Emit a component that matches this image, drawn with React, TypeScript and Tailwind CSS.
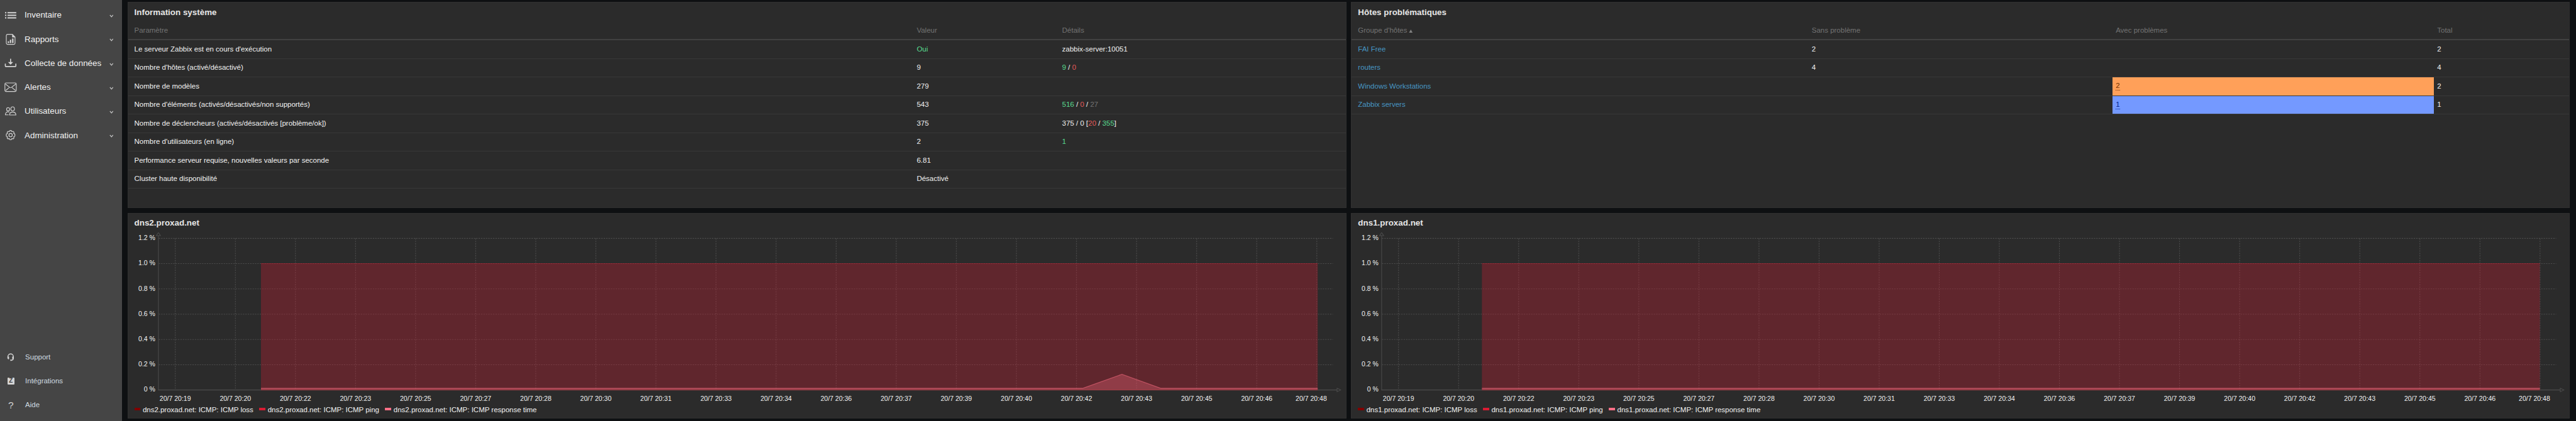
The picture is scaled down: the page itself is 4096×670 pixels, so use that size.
import type { ReactNode } from "react";

const stroke = { fill: "none", stroke: "#d4d4d4", strokeWidth: 1.4 } as const;

const icons: Record<string, ReactNode> = {
  list: (
    <g fill="#d4d4d4">
      {[5.2, 10.2, 15.2].map((y) => (
        <g key={y}>
          <rect x="1.2" y={y} width="2.6" height="2.4" />
          <rect x="6" y={y} width="17" height="2.4" />
        </g>
      ))}
    </g>
  ),
  report: (
    <g>
      <path {...stroke} d="M6 2h9.5L20.6 7.3V19a2.5 2.5 0 0 1-2.5 2.5H6A2.5 2.5 0 0 1 3.7 19V4.5A2.5 2.5 0 0 1 6 2z" />
      <path fill="#d4d4d4" d="M15 2l6 6h-6zM6.5 15.5h2.6V19H6.5zM10.6 12.6h2.6V19h-2.6zM14.9 10h2.7v9h-2.7z" />
    </g>
  ),
  download: (
    <g transform="translate(0 -1.5)">
      <path {...stroke} strokeWidth={2} d="M1.8 14v4.6a1 1 0 0 0 1 1h18.4a1 1 0 0 0 1-1V14" />
      <path fill="#d4d4d4" d="M11 4.5h2V11h4l-5 5.2L7 11h4z" />
    </g>
  ),
  mail: (
    <g>
      <rect {...stroke} x="1" y="3.7" width="22" height="16.6" rx="2.2" />
      <path {...stroke} d="M2 5.7L10 12a3.2 3.2 0 0 0 4 0L22 5.7M2.5 18.2l6.8-5.5M21.5 18.2l-6.8-5.5" />
    </g>
  ),
  users: (
    <g {...stroke} transform="translate(0 -1)">
      <ellipse cx="7.2" cy="8.2" rx="2.9" ry="3.3" />
      <ellipse cx="16" cy="7.4" rx="3.5" ry="4" />
      <path d="M8 19H1.9c0-3.6 1.8-5.8 5.3-5.8 1 0 1.8.2 2.5.5M10 19.3c0-3.800 2.200-5.600 6-5.600s6.300 1.800 6.300 5.600z" />
    </g>
  ),
  gear: (
    <g {...stroke} transform="translate(0 -1)">
      <circle cx="12" cy="12" r="3.3" />
      <path d="M12 3l1.700.4.9 2 2.300-.7 1.800 1.800-.7 2.300 2.100.9.400 2.300-.4 2.300-2.100.9.700 2.300-1.800 1.800-2.300-.7-.9 2-1.700.4-1.700-.4-.9-2-2.300.7-1.800-1.800.7-2.300-2.100-.9L3.500 12l.4-2.300 2.100-.9-.7-2.300 1.800-1.800 2.300.7.9-2z" />
    </g>
  ),
  support: (
    <g>
      <path {...stroke} strokeWidth={1.7} d="M6.8 13.5v-3a5.3 5.3 0 0 1 10.6 0v3c0 2.6-1.6 4-4.2 4" />
      <path fill="#d4d4d4" d="M6 10.5h3v5H8a2 2 0 0 1-2-2zM15.2 10.5h3v3a2 2 0 0 1-2 2h-1zM11.5 16.3h2.6v2.4h-2.6z" />
    </g>
  ),
};

function Icon({ name }: { name: string }) {
  return (
    <svg viewBox="0 0 24 24" className="h-[19.7px] w-[19.7px] shrink-0">
      {icons[name]}
    </svg>
  );
}

const menu = [
  ["list", "Inventaire"],
  ["report", "Rapports"],
  ["download", "Collecte de données"],
  ["mail", "Alertes"],
  ["users", "Utilisateurs"],
  ["gear", "Administration"],
];

function Sidebar() {
  return (
    <nav className="flex w-[193.7px] shrink-0 flex-col justify-between bg-[#454545] pt-[5.4px] pb-[6.4px]">
      <ul>
        {menu.map(([icon, label]) => (
          <li key={icon} className="flex h-[38.25px] items-center pr-[13.5px] pl-[7.4px] text-[13.4px] text-[#f2f2f2]">
            <Icon name={icon} />
            <span className="ml-[12px] grow whitespace-nowrap">{label}</span>
            <svg viewBox="0 0 8 6" className="mt-[2px] h-[5px] w-[6.6px]">
              <path d="M1 1l3 3.6L7 1" fill="none" stroke="#c8c8c8" strokeWidth="1.5" />
            </svg>
          </li>
        ))}
      </ul>
      <ul className="text-[11.49px] text-[#cfdbe1]">
        <li className="flex h-[38.1px] items-center pl-[7.4px]">
          <Icon name="support" />
          <span className="ml-[13px]">Support</span>
        </li>
        <li className="flex h-[38.1px] items-center pl-[11.5px]">
          <span className="flex h-[11.5px] w-[11.5px] items-center justify-center rounded-[1px] bg-[#d4d4d4] text-[10px] leading-none font-bold text-[#454545]">
            Z
          </span>
          <span className="ml-[17.1px]">Intégrations</span>
        </li>
        <li className="flex h-[38.1px] items-center pl-[7.4px]">
          <span className="w-[19.7px] text-center text-[15.5px] leading-none text-[#d4d4d4]">?</span>
          <span className="ml-[13px]">Aide</span>
        </li>
      </ul>
    </nav>
  );
}

function Widget({ title, children, chart }: { title: string; children: ReactNode; chart?: boolean }) {
  return (
    <section className="flex flex-col overflow-hidden border border-[#303030] bg-[#2b2b2b]">
      <h4
        className={`flex h-[30.2px] shrink-0 items-center pl-[9.85px] text-[13.4px] font-bold text-[#e6e6e6] ${chart ? "" : "pt-[1.6px]"}`}
      >
        {title}
      </h4>
      {children}
    </section>
  );
}

function Row({ cols, cells }: { cols: string; cells: ReactNode[] }) {
  return (
    <div className={`grid h-[29.545px] border-b border-[#383838] ${cols}`}>
      {cells.map((cell, i) => (
        <div key={i} className={`flex items-center whitespace-pre ${i === 0 ? "pl-[9.85px]" : ""}`}>
          {i === 0 || typeof cell !== "string" ? cell : <span className="pl-[4.8px]">{cell}</span>}
        </div>
      ))}
    </div>
  );
}

function Head({ cols, cells }: { cols: string; cells: ReactNode[] }) {
  return (
    <div className={`grid h-[29.6px] border-b-2 border-[#414141] text-[#737373] ${cols}`}>
      {cells.map((cell, i) => (
        <div key={i} className={`flex items-center ${i === 0 ? "pl-[9.85px]" : "pl-[4.8px]"}`}>
          {cell}
        </div>
      ))}
    </div>
  );
}

const Green = ({ children }: { children: ReactNode }) => <span className="text-[#59db8f]">{children}</span>;
const Red = ({ children }: { children: ReactNode }) => <span className="text-[#e45959]">{children}</span>;
const Cell = ({ children }: { children: ReactNode }) => <span className="pl-[4.8px]">{children}</span>;

const infoCols = "grid-cols-[1249.2px_231.1px_1fr]";
const hostCols = "grid-cols-[726.5px_483.4px_511.1px_1fr]";

const infoRows: ReactNode[][] = [
  ["Le serveur Zabbix est en cours d'exécution", <Cell><Green>Oui</Green></Cell>, "zabbix-server:10051"],
  ["Nombre d'hôtes (activé/désactivé)", "9", <Cell><Green>9</Green> / <Red>0</Red></Cell>],
  ["Nombre de modèles", "279", ""],
  [
    "Nombre d'éléments (activés/désactivés/non supportés)",
    "543",
    <Cell><Green>516</Green> / <Red>0</Red> / <span className="text-[#737373]">27</span></Cell>,
  ],
  [
    "Nombre de déclencheurs (activés/désactivés [problème/ok])",
    "375",
    <Cell>375 / 0 [<Red>20</Red> / <Green>355</Green>]</Cell>,
  ],
  ["Nombre d'utilisateurs (en ligne)", "2", <Cell><Green>1</Green></Cell>],
  ["Performance serveur requise, nouvelles valeurs par seconde", "6.81", ""],
  ["Cluster haute disponibilité", "Désactivé", ""],
];

const Link = ({ children }: { children: ReactNode }) => <a className="text-[#4796c4]">{children}</a>;

const hostRows: ReactNode[][] = [
  [<Link>FAI Free</Link>, "2", "", "2"],
  [<Link>routers</Link>, "4", "", "4"],
  [
    <Link>Windows Workstations</Link>,
    "",
    <div className="flex h-full w-full items-center bg-[#ffa059] pl-[4.8px] text-[#733100]">
      <span className="border-b border-dotted border-[#733100] leading-[13px]">2</span>
    </div>,
    "2",
  ],
  [
    <Link>Zabbix servers</Link>,
    "",
    <div className="flex h-full w-full items-center bg-[#7499ff] pl-[4.8px] text-[#00268e]">
      <span className="border-b border-dotted border-[#00268e] leading-[13px]">1</span>
    </div>,
    "1",
  ],
];

const times = [
  "20:19", "20:20", "20:22", "20:23", "20:25", "20:27", "20:28", "20:30", "20:31", "20:33",
  "20:34", "20:36", "20:37", "20:39", "20:40", "20:42", "20:43", "20:45", "20:46", "20:48",
];
const levels = ["1.2 %", "1.0 %", "0.8 %", "0.6 %", "0.4 %", "0.2 %", "0 %"];
const gridX = (i: number) => 91 + i * 116.41;
const gridY = (i: number) => 11.4 + i * 49;

function Chart({ host, start, end, peak }: { host: string; start: number; end: number; peak?: boolean }) {
  const base = gridY(6);
  const low = base - 3.2;
  const bump = peak ? `L1848.8 ${low}L1925.3 275L2001 ${low}` : "";
  const series = `M${start} ${low}${bump}L${end} ${low}`;
  return (
    <Widget title={host} chart>
      <svg viewBox="0 0 2360 332" className="h-[272.465px] w-[1936.8px] shrink-0">
        <g stroke="#4c4c4c" strokeWidth="1.3" fill="none">
          {levels.slice(0, 6).map((l, i) => (
            <path key={l} d={`M59 ${gridY(i)}H2334`} strokeDasharray="2.6 2.06" />
          ))}
          {times.map((t, i) => (
            <path key={t} d={`M${gridX(i)} ${gridY(0)}V${base - 2}`} strokeDasharray="2.6 2.06" />
          ))}
          <path d={`M58.3 6V${base}H2342M54.3 6h8l-4-6zM2342 ${base - 3.5}v7l7-3.5z`} />
        </g>
        <rect x={start} y={gridY(1)} width={end - start} height={base - gridY(1) + 0.6} fill="#d91c33" fillOpacity="0.3" />
        <path d={`M${start} ${gridY(1)}H${end}`} stroke="#d91c33" strokeOpacity="0.5" strokeWidth="1.2" />
        <path d={`M${start} ${base}H${end}`} stroke="#800000" strokeOpacity="0.4" strokeWidth="1.2" />
        <path d={`${series}V${base + 0.6}H${start}z`} fill="#ff6f86" fillOpacity="0.3" />
        <path d={series} fill="none" stroke="#ff6f86" strokeOpacity="0.5" strokeWidth="1.6" />
        <g fill="#f2f2f2" fontSize="12.83">
          {levels.map((l, i) => (
            <text key={l} x="52.3" y={gridY(i) + 3.4} textAnchor="end">
              {l}
            </text>
          ))}
          {times.map((t, i) => (
            <text key={t} x={i === 19 ? 2292 : gridX(i)} y="326" textAnchor="middle">
              20/7 {t}
            </text>
          ))}
        </g>
      </svg>
      <div className="flex h-[19.4px] items-center gap-[9.5px] pl-[9.85px] text-[11.49px] text-[#f2f2f2]">
        <span className="flex items-center gap-[3.5px]">
          <i className="mb-[2.5px] h-[4.5px] w-[9.85px] bg-[#800000]" />
          {host}: ICMP: ICMP loss
        </span>
        <span className="flex items-center gap-[3.5px]">
          <i className="mb-[2.5px] h-[4.5px] w-[9.85px] bg-[#d91c33]" />
          {host}: ICMP: ICMP ping
        </span>
        <span className="flex items-center gap-[3.5px]">
          <i className="mb-[2.5px] h-[4.5px] w-[9.85px] bg-[#ff6f86]" />
          {host}: ICMP: ICMP response time
        </span>
      </div>
    </Widget>
  );
}

export default function App() {
  return (
    <div className="flex h-[670px] w-[4096px] overflow-hidden bg-[#0e1012] font-['Liberation_Sans',Arial,sans-serif] text-[11.49px] text-[#f2f2f2]">
      <Sidebar />
      <main className="grid grid-cols-[1938px_1937.2px] grid-rows-[327.5px_327.5px] gap-x-[7.8px] gap-y-[8.2px] pt-[3.3px] pl-[9px]">
        <Widget title="Information système">
          <div>
            <Head cols={infoCols} cells={["Paramètre", "Valeur", "Détails"]} />
            {infoRows.map((cells, i) => (
              <Row key={i} cols={infoCols} cells={cells} />
            ))}
          </div>
        </Widget>
        <Widget title="Hôtes problématiques">
          <div>
            <Head
              cols={hostCols}
              cells={[
                <span className="flex items-center gap-[2.2px]">
                  Groupe d'hôtes
                  <svg viewBox="0 0 8 7" className="mt-[2.5px] h-[5.7px] w-[6.6px]">
                    <path d="M4 0l4 7H0z" fill="#808080" />
                  </svg>
                </span>,
                "Sans problème",
                "Avec problèmes",
                "Total",
              ]}
            />
            {hostRows.map((cells, i) => (
              <Row key={i} cols={hostCols} cells={cells} />
            ))}
          </div>
        </Widget>
        <Chart host="dns2.proxad.net" start={257} end={2304.5} peak />
        <Chart host="dns1.proxad.net" start={252.6} end={2302.5} />
      </main>
    </div>
  );
}
